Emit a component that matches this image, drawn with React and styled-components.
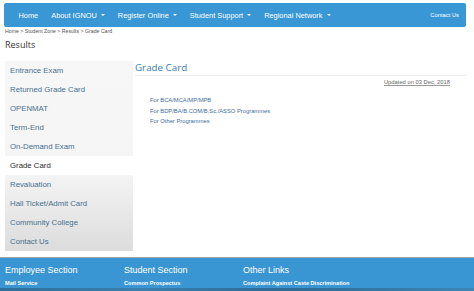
import React from "react";
import styled, { createGlobalStyle } from "styled-components";

const Global = createGlobalStyle`
  html, body { margin: 0; padding: 0; background: #fff; }
  body { font-family: "Liberation Sans", Arial, sans-serif; width: 474px; overflow: hidden; }
  * { box-sizing: border-box; }
`;

const Page = styled.div`
  width: 474px;
  height: 291px;
  display: flex;
  flex-direction: column;
`;

const Container = styled.div`
  padding: 3px 8px 0 4px;
  flex: 1;
`;

const Navbar = styled.nav`
  height: 24px;
  background: #3a97d5;
  border-radius: 2px;
  display: flex;
  align-items: center;
  padding: 0 7px 0 8px;
`;

const NavItem = styled.a`
  color: #fff;
  font-size: ${(p) => (p.$small ? "5.8px" : "7.4px")};
  padding: 0 6.5px;
  white-space: nowrap;
  margin-left: ${(p) => (p.$right ? "auto" : "0")};
  padding-right: ${(p) => (p.$right ? "0" : "6.5px")};
  display: flex;
  align-items: center;
`;

const Caret = styled.span`
  display: inline-block;
  width: 0;
  height: 0;
  margin-left: 4px;
  border-left: 2.2px solid transparent;
  border-right: 2.2px solid transparent;
  border-top: 2.2px solid #fff;
`;

const Breadcrumb = styled.div`
  font-size: 5.2px;
  color: #555;
  line-height: 8px;
  padding-left: 1px;
`;

const Heading = styled.h1`
  margin: 3px 0 0 1px;
  font-family: "Open Sans", "Liberation Sans", sans-serif;
  font-weight: 400;
  font-size: 9px;
  line-height: 14px;
  color: #333;
`;

const Content = styled.div`
  display: flex;
  margin-top: 9px;
`;

const Sidebar = styled.ul`
  list-style: none;
  margin: 0 0 0 1px;
  padding: 0;
  width: 128px;
  background: linear-gradient(#f7f7f7 0%, #f5f5f5 58%, #dcdcdc 100%);
`;

const SideItem = styled.li`
  height: 19px;
  display: flex;
  align-items: center;
  padding-left: 5px;
  font-size: 7.8px;
  color: ${(p) => (p.$active ? "#2b2b2b" : "#48708f")};
  background: ${(p) => (p.$active ? "#fff" : "transparent")};
`;

const Main = styled.div`
  flex: 1;
  margin-left: 2px;
`;

const Title = styled.h2`
  margin: 0;
  font-family: "Open Sans", "Liberation Sans", sans-serif;
  font-weight: 400;
  font-size: 9.8px;
  line-height: 14px;
  color: #3c7bb0;
  border-bottom: 1px solid #eee;
`;

const Updated = styled.div`
  text-align: right;
  padding-right: 16px;
  margin-top: 2px;
  height: 9px;
  line-height: 8px;
  font-size: 5.8px;
`;

const UpdatedText = styled.span`
  color: #666;
  border-bottom: 1px solid #999;
`;

const Links = styled.ul`
  list-style: none;
  margin: 8px 0 0 0;
  padding: 0 0 0 15px;
`;

const LinkItem = styled.li`
  font-size: 5.8px;
  line-height: 10.7px;
  color: #3d6e9e;
`;

const Footer = styled.footer`
  height: 34px;
  border-top: 1px solid #9aa7b0;
  background: #3a96d3;
  display: flex;
  flex-direction: column;
`;

const FooterCols = styled.div`
  display: flex;
  padding-left: 5px;
  flex: 1;
`;

const FooterCol = styled.div`
  width: 119px;
`;

const FooterTitle = styled.div`
  color: #fff;
  font-size: 9px;
  line-height: 12px;
  margin-top: 6px;
`;

const FooterLink = styled.div`
  color: #fff;
  font-size: 5.6px;
  font-weight: 700;
  line-height: 8px;
  margin-top: 3px;
`;

const FooterStrip = styled.div`
  height: 3px;
  background: linear-gradient(90deg, #2f6f9a, #3a7fae 30%, #2d6a94 60%, #3d86b5);
`;

const sideItems = [
  "Entrance Exam",
  "Returned Grade Card",
  "OPENMAT",
  "Term-End",
  "On-Demand Exam",
  "Grade Card",
  "Revaluation",
  "Hall Ticket/Admit Card",
  "Community College",
  "Contact Us",
];

export default function App() {
  return (
    <Page>
      <Global />
      <Container>
        <Navbar>
          <NavItem>Home</NavItem>
          <NavItem>About IGNOU<Caret /></NavItem>
          <NavItem>Register Online<Caret /></NavItem>
          <NavItem>Student Support<Caret /></NavItem>
          <NavItem>Regional Network<Caret /></NavItem>
          <NavItem $right $small>Contact Us</NavItem>
        </Navbar>
        <Breadcrumb>Home &gt; Student Zone &gt; Results &gt; Grade Card</Breadcrumb>
        <Heading>Results</Heading>
        <Content>
          <Sidebar>
            {sideItems.map((s) => (
              <SideItem key={s} $active={s === "Grade Card"}>{s}</SideItem>
            ))}
          </Sidebar>
          <Main>
            <Title>Grade Card</Title>
            <Updated><UpdatedText>Updated on 03 Dec, 2018</UpdatedText></Updated>
            <Links>
              <LinkItem>For BCA/MCA/MP/MPB</LinkItem>
              <LinkItem>For BDP/BA/B.COM/B.Sc./ASSO Programmes</LinkItem>
              <LinkItem>For Other Programmes</LinkItem>
            </Links>
          </Main>
        </Content>
      </Container>
      <Footer>
        <FooterCols>
          <FooterCol>
            <FooterTitle>Employee Section</FooterTitle>
            <FooterLink>Mail Service</FooterLink>
          </FooterCol>
          <FooterCol>
            <FooterTitle>Student Section</FooterTitle>
            <FooterLink>Common Prospectus</FooterLink>
          </FooterCol>
          <FooterCol>
            <FooterTitle>Other Links</FooterTitle>
            <FooterLink>Complaint Against Caste Discrimination</FooterLink>
          </FooterCol>
        </FooterCols>
        <FooterStrip />
      </Footer>
    </Page>
  );
}
